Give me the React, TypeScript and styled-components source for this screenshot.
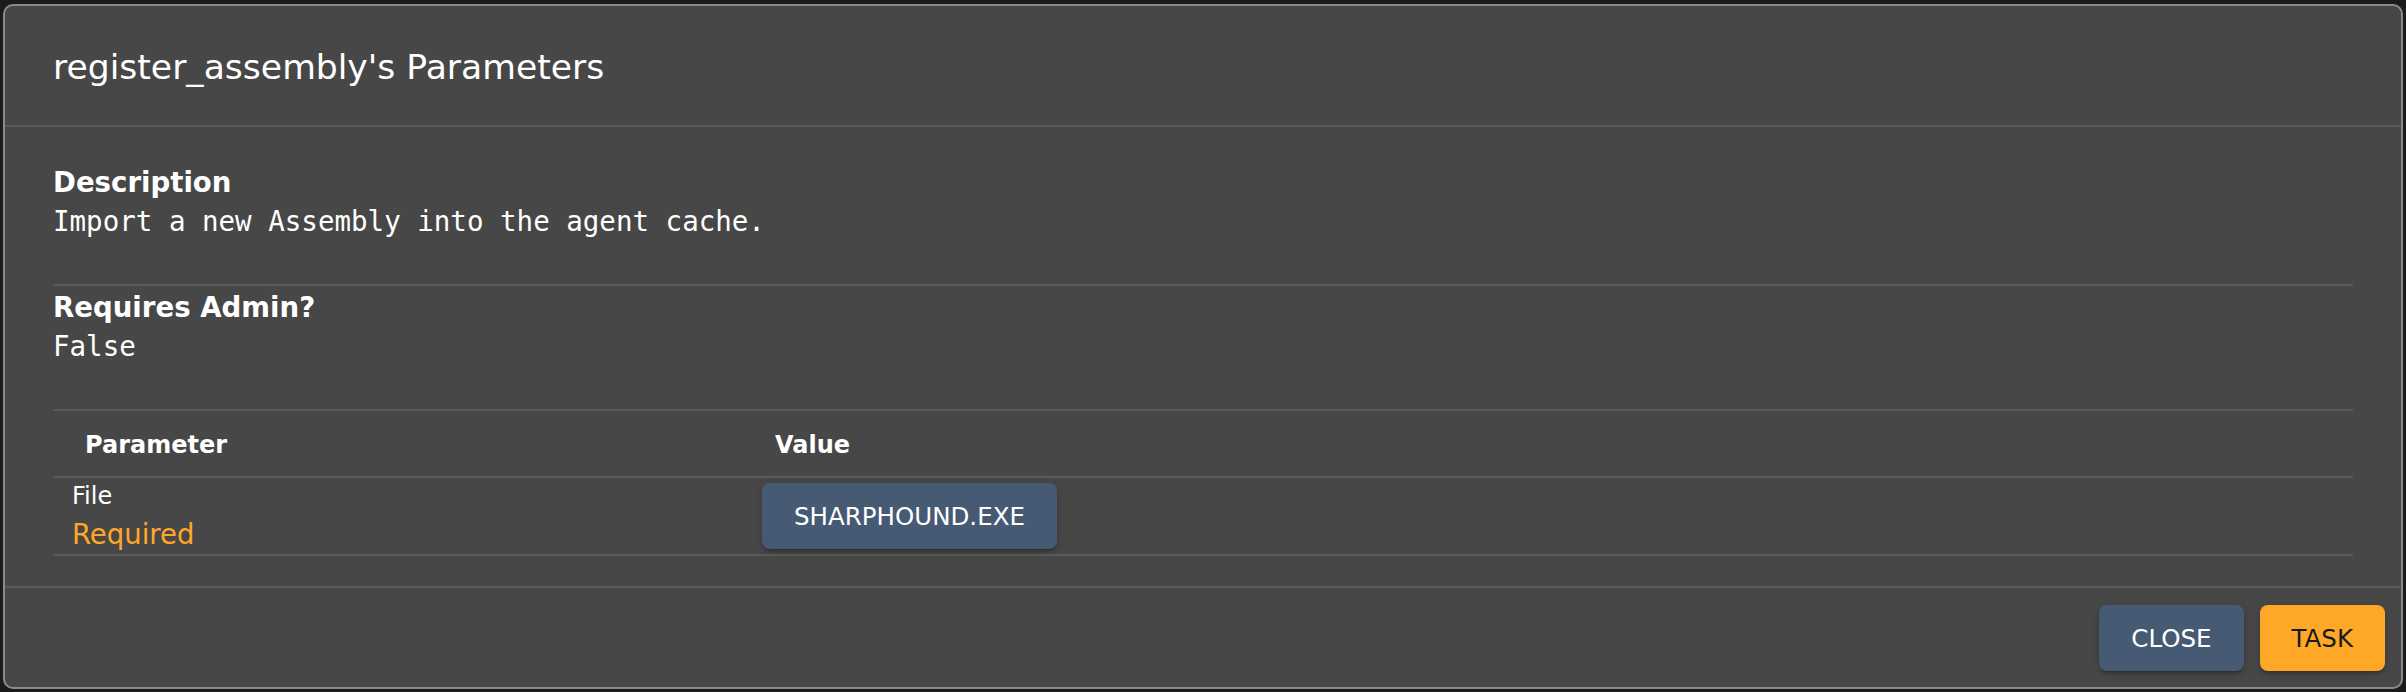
import React from 'react';
import styled, { createGlobalStyle } from 'styled-components';

const GlobalStyle = createGlobalStyle`
  html, body {
    margin: 0;
    padding: 0;
    background: #1b1b1b;
    font-family: "DejaVu Sans", Verdana, sans-serif;
  }
  * {
    box-sizing: border-box;
  }
`;

const params = [
  { name: 'File', required: true, value: 'SHARPHOUND.EXE' },
];

const App = () => {
  return (
    <>
      <GlobalStyle />
      <Page>
        <Dialog>
          <Header>
            <Title>register_assembly's Parameters</Title>
          </Header>
          <Content>
            <Heading>Description</Heading>
            <MonoValue>Import a new Assembly into the agent cache.</MonoValue>
            <Divider />
            <Heading>Requires Admin?</Heading>
            <MonoValue>False</MonoValue>
            <Divider />
            <ParamTable>
              <colgroup>
                <col style={{ width: '30%' }} />
                <col />
              </colgroup>
              <thead>
                <tr>
                  <HeadCell>Parameter</HeadCell>
                  <HeadCell>Value</HeadCell>
                </tr>
              </thead>
              <tbody>
                {params.map((p) => (
                  <tr key={p.name}>
                    <BodyCell>
                      <ParamName>{p.name}</ParamName>
                      {p.required && <RequiredTag>Required</RequiredTag>}
                    </BodyCell>
                    <BodyCell>
                      <Button variant="blue">{p.value}</Button>
                    </BodyCell>
                  </tr>
                ))}
              </tbody>
            </ParamTable>
          </Content>
          <Footer>
            <Button variant="blue">CLOSE</Button>
            <Button variant="orange">TASK</Button>
          </Footer>
        </Dialog>
      </Page>
    </>
  );
};

export default App;

const Page = styled.div`
  width: 2406px;
  height: 692px;
  padding: 4px 3px 0 3px;
`;

const Dialog = styled.div`
  width: 2400px;
  background: #474747;
  border: 2px solid #8a8a8a;
  border-radius: 10px;
  display: flex;
  flex-direction: column;
  color: #ffffff;
`;

const Header = styled.div`
  height: 121px;
  padding: 39px 48px 0 48px;
  border-bottom: 2px solid #5a5a5a;
`;

const Title = styled.div`
  font-size: 34.6px;
  line-height: 45px;
  font-weight: 400;
  color: #ffffff;
`;

const Content = styled.div`
  padding: 36px 48px 30px 48px;
`;

const Heading = styled.div`
  font-size: 27.6px;
  line-height: 39px;
  font-weight: 700;
`;

const MonoValue = styled.div`
  font-family: "DejaVu Sans Mono", "Liberation Mono", monospace;
  font-size: 27.5px;
  line-height: 39px;
`;

const Divider = styled.div`
  height: 2px;
  background: #5a5a5a;
  margin: 43px 0 2px 0;
`;

const ParamTable = styled.table`
  width: 100%;
  border-collapse: collapse;
  margin-top: -2px;
`;

const HeadCell = styled.th`
  height: 66px;
  padding: 2px 0 0 32px;
  text-align: left;
  font-size: 24px;
  font-weight: 700;
  vertical-align: middle;
  border-bottom: 2px solid #5a5a5a;
`;

const BodyCell = styled.td`
  height: 78px;
  padding: 0 0 0 19px;
  vertical-align: top;
  border-bottom: 2px solid #5a5a5a;

  & > button {
    margin-top: 5px;
  }
`;

const ParamName = styled.div`
  font-size: 24px;
  line-height: 37px;
`;

const RequiredTag = styled.div`
  font-size: 27.5px;
  line-height: 39px;
  color: #ffa726;
`;

const Footer = styled.div`
  display: flex;
  justify-content: flex-end;
  gap: 16px;
  padding: 17px 16px 16px 16px;
  border-top: 2px solid #5a5a5a;
`;

const Button = styled.button<{ variant: 'blue' | 'orange' }>`
  height: 66px;
  padding: 0 32px;
  border: none;
  border-radius: 8px;
  font-family: "DejaVu Sans", Verdana, sans-serif;
  font-size: 24.5px;
  font-weight: 400;
  background: ${(p) => (p.variant === 'orange' ? '#ffa726' : '#475a74')};
  color: ${(p) => (p.variant === 'orange' ? '#1a1a1a' : '#ffffff')};
  box-shadow: 0 4px 2px -3px rgba(0, 0, 0, 0.2), 0 3px 3px 0 rgba(0, 0, 0, 0.14),
    0 2px 8px 0 rgba(0, 0, 0, 0.12);
  cursor: pointer;
`;
